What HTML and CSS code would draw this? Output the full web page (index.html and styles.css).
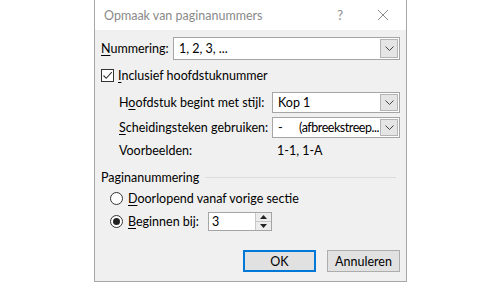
FILE: index.html
```html
<!DOCTYPE html>
<html lang="nl">
<head>
<meta charset="utf-8">
<link rel="stylesheet" href="styles.css">
</head>
<body>
<div class="dialog">
  <div class="titlebar">
    <span class="title">Opmaak van paginanummers</span>
    <span class="help">?</span>
    <svg class="close" width="12" height="12" viewBox="0 0 12 12"><path d="M1 1L11 11M11 1L1 11" stroke="#8c8c8c" stroke-width="1" fill="none"/></svg>
  </div>
  <div class="content">
    <div class="row numrow">
      <span class="label"><u>N</u>ummering:</span>
      <div class="combo wide"><span class="val">1, 2, 3, ...</span><span class="btn"><svg width="9" height="5" viewBox="0 0 9 5"><path d="M0.5 0.5L4.5 4.5L8.5 0.5" stroke="#444" fill="none"/></svg></span></div>
    </div>
    <div class="check">
      <span class="box"><svg width="11" height="11" viewBox="0 0 11 11"><path d="M1.5 5.5L4.2 8.3L9.8 2.2" stroke="#333" stroke-width="1.1" fill="none"/></svg></span>
      <span><u>I</u>nclusief hoofdstuknummer</span>
    </div>
    <div class="sub">
      <span class="label">H<u>o</u>ofdstuk begint met stijl:</span>
      <div class="combo"><span class="val">Kop 1</span><span class="btn"><svg width="9" height="5" viewBox="0 0 9 5"><path d="M0.5 0.5L4.5 4.5L8.5 0.5" stroke="#444" fill="none"/></svg></span></div>
      <span class="label"><u>S</u>cheidingsteken gebruiken:</span>
      <div class="combo"><span class="val"><span class="dash">-</span><span class="tight">(afbreekstreep...</span></span><span class="btn"><svg width="9" height="5" viewBox="0 0 9 5"><path d="M0.5 0.5L4.5 4.5L8.5 0.5" stroke="#444" fill="none"/></svg></span></div>
      <span class="label">Voorbeelden:</span>
      <span class="example">1-1, 1-A</span>
    </div>
    <div class="group">
      <span>Paginanummering</span><span class="line"></span>
    </div>
    <div class="radio">
      <span class="circle"></span>
      <span><u>D</u>oorlopend vanaf vorige sectie</span>
    </div>
    <div class="radio r2">
      <span class="circle on"></span>
      <span class="rlabel"><u>B</u>eginnen bij:</span>
      <div class="spin"><span class="val">3</span><span class="arrows"><span class="up"><svg width="7" height="4" viewBox="0 0 7 4"><path d="M0 4L3.5 0L7 4Z" fill="#222"/></svg></span><span class="down"><svg width="7" height="4" viewBox="0 0 7 4"><path d="M0 0L3.5 4L7 0Z" fill="#222"/></svg></span></span></div>
    </div>
    <div class="buttons">
      <button class="ok">OK</button>
      <button>Annuleren</button>
    </div>
  </div>
</div>
</body>
</html>
```
FILE: styles.css
```css
html, body {
  margin: 0;
  padding: 0;
  background: #fff;
}
body {
  width: 501px;
  height: 282px;
  overflow: hidden;
  font-family: Lato, "Noto Sans", sans-serif;
  font-size: 12.5px;
  color: #000;
}
.dialog {
  margin-left: 94px;
  width: 311px;
  height: 281px;
  border: 1px solid #a6a6a6;
  border-top: none;
  background: #f0f0f0;
  display: flex;
  flex-direction: column;
}
.titlebar {
  height: 30px;
  background: #fff;
  display: flex;
  align-items: center;
  padding-left: 9px;
}
.title {
  color: #8a8a8a;
  flex: 1;
}
.help {
  color: #8a8a8a;
  font-size: 13px;
  margin-right: 34px;
}
.close {
  margin-right: 17px;
}
.content {
  padding: 7px 6px 0 6px;
  display: flex;
  flex-direction: column;
}
u { text-decoration: underline; text-underline-offset: 2px; }
.row {
  display: flex;
  align-items: center;
}
.label { white-space: nowrap; }
.numrow .label { width: 72px; }
.combo {
  height: 20px;
  border: 1px solid #a5a5a5;
  background: #fff;
  display: flex;
  align-items: center;
  box-sizing: content-box;
}
.combo.wide {
  flex: 1;
  height: 21px;
}
.combo .val {
  flex: 1;
  padding-left: 5px;
  white-space: nowrap;
  overflow: hidden;
}
.combo .btn {
  width: 16px;
  align-self: stretch;
  margin: 1px;
  background: #e5e5e5;
  border: 1px solid #b4b4b4;
  display: flex;
  align-items: center;
  justify-content: center;
}
.dash {
  display: inline-block;
  width: 21px;
}
.tight { letter-spacing: -0.45px; }
.check {
  display: flex;
  align-items: center;
  margin-top: 8px;
  height: 14px;
}
.box {
  width: 11px;
  height: 11px;
  border: 1px solid #333;
  background: #fff;
  margin-right: 4px;
  display: flex;
}
.sub {
  display: grid;
  grid-template-columns: 153px 128px;
  grid-template-rows: 21px 21px 16px;
  row-gap: 4px;
  align-items: center;
  margin-left: 18px;
  margin-top: 10px;
}
.sub .combo { height: 19px; }
.example { padding-left: 5px; }
.group {
  display: flex;
  align-items: center;
  margin-top: 12px;
}
.group .line {
  flex: 1;
  height: 1px;
  background: #dcdcdc;
  margin-left: 6px;
  margin-right: 4px;
}
.radio {
  display: flex;
  align-items: center;
  margin-left: 9px;
  margin-top: 6px;
}
.circle {
  width: 11px;
  height: 11px;
  border: 1px solid #333;
  border-radius: 50%;
  background: #fff;
  margin-right: 5px;
  position: relative;
}
.circle.on::after {
  content: "";
  position: absolute;
  left: 2px;
  top: 2px;
  width: 7px;
  height: 7px;
  border-radius: 50%;
  background: #222;
}
.r2 { margin-top: 6px; }
.rlabel { width: 80px; }
.spin {
  width: 62px;
  height: 17px;
  border: 1px solid #a5a5a5;
  background: #fff;
  display: flex;
  align-items: center;
}
.spin .val { flex: 1; padding-left: 3px; }
.arrows {
  width: 15px;
  align-self: stretch;
  display: flex;
  flex-direction: column;
  border-left: 1px solid #c8c8c8;
}
.arrows span {
  flex: 1;
  background: #ececec;
  display: flex;
  align-items: center;
  justify-content: center;
}
.arrows .up { border-bottom: 1px solid #c8c8c8; }
.buttons {
  display: flex;
  justify-content: flex-end;
  gap: 11px;
  margin-top: 19px;
}
button {
  font-family: inherit;
  font-size: 12.5px;
  color: #000;
  width: 73px;
  height: 22px;
  background: #e1e1e1;
  border: 1px solid #adadad;
  padding: 0;
}
button.ok {
  border: 2px solid #0078d7;
}
```
